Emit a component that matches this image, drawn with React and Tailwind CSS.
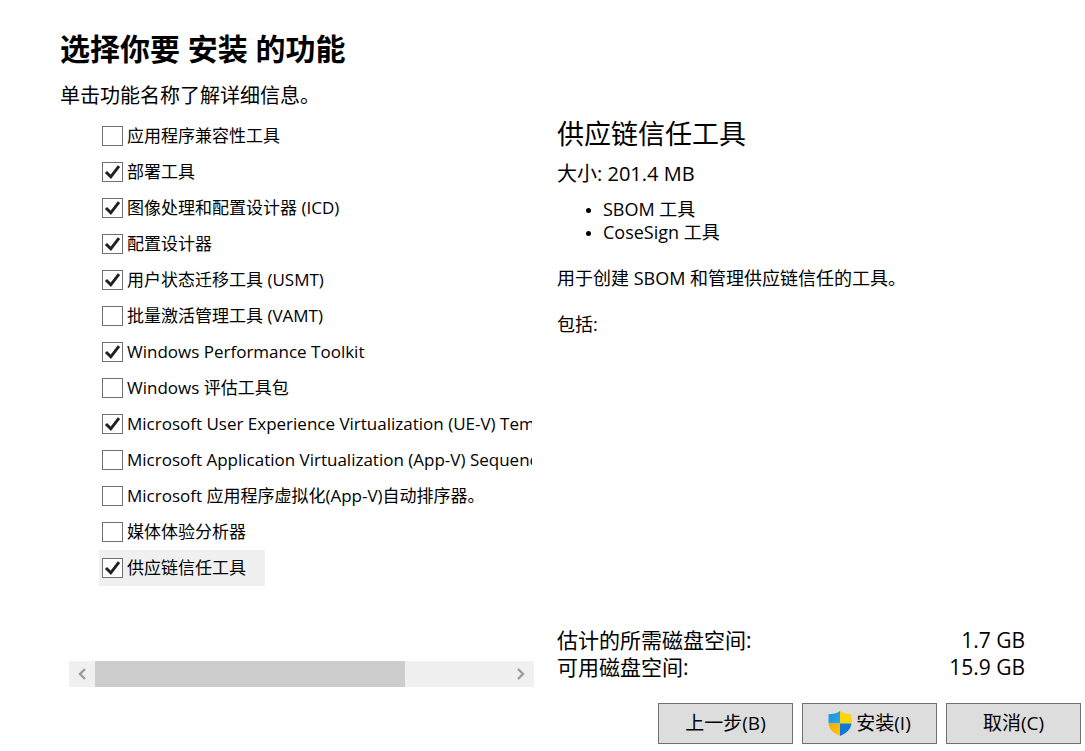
import React, { useState } from "react";

const initialFeatures = [
  { id: "compat", label: "应用程序兼容性工具", checked: false },
  { id: "deploy", label: "部署工具", checked: true },
  { id: "icd", label: "图像处理和配置设计器 (ICD)", checked: true },
  { id: "designer", label: "配置设计器", checked: true },
  { id: "usmt", label: "用户状态迁移工具 (USMT)", checked: true },
  { id: "vamt", label: "批量激活管理工具 (VAMT)", checked: false },
  { id: "wpt", label: "Windows Performance Toolkit", checked: true },
  { id: "assessment", label: "Windows 评估工具包", checked: false },
  { id: "uev", label: "Microsoft User Experience Virtualization (UE-V) Template", checked: true },
  { id: "appv", label: "Microsoft Application Virtualization (App-V) Sequencer", checked: false },
  { id: "autoseq", label: "Microsoft 应用程序虚拟化(App-V)自动排序器。", checked: false },
  { id: "media", label: "媒体体验分析器", checked: false },
  { id: "supply", label: "供应链信任工具", checked: true },
];

const FeatureRow = ({ feature, selected, onToggle }) => (
  <li>
    <label
      htmlFor={feature.id}
      className={`inline-flex h-9 items-center gap-1 pl-[3px] pr-[19px] text-[17px] whitespace-nowrap ${selected ? "bg-[#f0f0f0]" : ""}`}
    >
      <span className="grid shrink-0">
        <input
          type="checkbox"
          id={feature.id}
          checked={feature.checked}
          onChange={() => onToggle(feature.id)}
          className="peer col-start-1 row-start-1 h-5 w-[21px] appearance-none border border-[#707070] bg-white"
        />
        <svg
          viewBox="0 0 21 20"
          className="pointer-events-none invisible col-start-1 row-start-1 h-5 w-[21px] peer-checked:visible"
          fill="none"
          stroke="#212121"
          strokeWidth="3"
          aria-hidden
        >
          <path d="M4 10 L8.8 14.8 L17 4.2" />
        </svg>
      </span>
      <span>{feature.label}</span>
    </label>
  </li>
);

const ScrollArrow = ({ label, d }) => (
  <button type="button" aria-label={label} className="flex w-[26px] items-center justify-center bg-[#f0f0f0]">
    <svg viewBox="0 0 10 12" className="h-3 w-[10px]" fill="none" stroke="#9c9c9c" strokeWidth="2.4" aria-hidden>
      <path d={d} />
    </svg>
  </button>
);

const Shield = () => (
  <svg viewBox="0 0 24 25" className="h-[25px] w-6" aria-hidden>
    <defs>
      <clipPath id="shield">
        <path d="M12 0 C9 2.2 5 3.2 0.5 3.2 V11 C0.5 18 5 22 12 25 C19 22 23.5 18 23.5 11 V3.2 C19 3.2 15 2.2 12 0 Z" />
      </clipPath>
      <linearGradient id="blueTop" x1="0" y1="0" x2="1" y2="1">
        <stop offset="0" stopColor="#1c8fd6" />
        <stop offset="1" stopColor="#2aabee" />
      </linearGradient>
      <linearGradient id="yellowBottom" x1="0" y1="0" x2="1" y2="1">
        <stop offset="0" stopColor="#f5a800" />
        <stop offset="1" stopColor="#ffc80a" />
      </linearGradient>
    </defs>
    <g clipPath="url(#shield)">
      <rect width="12" height="12.5" fill="url(#blueTop)" />
      <rect x="12" width="12" height="12.5" fill="#ffd400" />
      <rect y="12.5" width="12" height="12.5" fill="url(#yellowBottom)" />
      <rect x="12" y="12.5" width="12" height="12.5" fill="#0f78d4" />
    </g>
  </svg>
);

const FooterButton = ({ children }) => (
  <button
    type="button"
    className="flex h-[41px] w-[135px] items-center justify-center gap-1 border border-[#707070] bg-[#dddddd] text-[19px]"
  >
    {children}
  </button>
);

const App = () => {
  const [features, setFeatures] = useState(initialFeatures);
  const [selected, setSelected] = useState("supply");

  const handleToggle = (id) => {
    setSelected(id);
    setFeatures(features.map((f) => (f.id === id ? { ...f, checked: !f.checked } : f)));
  };

  return (
    <div className="flex min-h-screen flex-col bg-white pt-7 pb-[7px] font-['Open_Sans','Noto_Sans_CJK_SC',sans-serif] text-black">
      {/* Header */}
      <header className="px-[60px]">
        <h1 className="text-[30px] leading-[42px] font-bold">选择你要 安装 的功能</h1>
        <p className="mt-[10px] text-[20px] leading-8">单击功能名称了解详细信息。</p>
      </header>

      <main className="grid flex-1 grid-cols-[474fr_468fr] gap-[23px] px-[60px]">
        {/* Feature list */}
        <section className="flex min-w-0 flex-col pt-[6px] pl-[9px]">
          <ul className="mr-[2px] overflow-hidden pl-[30px]">
            {features.map((feature) => (
              <FeatureRow
                key={feature.id}
                feature={feature}
                selected={feature.id === selected}
                onToggle={handleToggle}
              />
            ))}
          </ul>
          <div className="mt-auto flex h-[26px] bg-[#f0f0f0]">
            <ScrollArrow label="向左滚动" d="M8 1 L3 6 L8 11" />
            <div className="flex-1">
              <div className="h-full w-3/4 bg-[#cdcdcd]" />
            </div>
            <ScrollArrow label="向右滚动" d="M2 1 L7 6 L2 11" />
          </div>
        </section>

        {/* Details of the selected feature */}
        <section className="flex min-w-0 flex-col text-[18px] leading-[23px]">
          <h2 className="pt-[2px] text-[27px] leading-10">供应链信任工具</h2>
          <p className="mt-1 text-[20px] leading-8">大小: 201.4 MB</p>
          <ul className="mt-2 list-disc pl-[46px] marker:text-sm">
            <li>SBOM 工具</li>
            <li>CoseSign 工具</li>
          </ul>
          <p className="mt-[23px]">用于创建 SBOM 和管理供应链信任的工具。</p>
          <p className="mt-[23px]">包括:</p>

          <dl className="mt-auto grid grid-cols-[1fr_auto] pb-[6px] text-[21px] leading-[27px]">
            <dt>估计的所需磁盘空间:</dt>
            <dd className="text-right">1.7 GB</dd>
            <dt>可用磁盘空间:</dt>
            <dd className="text-right">15.9 GB</dd>
          </dl>
        </section>
      </main>

      <footer className="mt-4 flex justify-end gap-[9px] pr-1">
        <FooterButton>上一步(B)</FooterButton>
        <FooterButton>
          <Shield />
          安装(I)
        </FooterButton>
        <FooterButton>取消(C)</FooterButton>
      </footer>
    </div>
  );
};

export default App;
